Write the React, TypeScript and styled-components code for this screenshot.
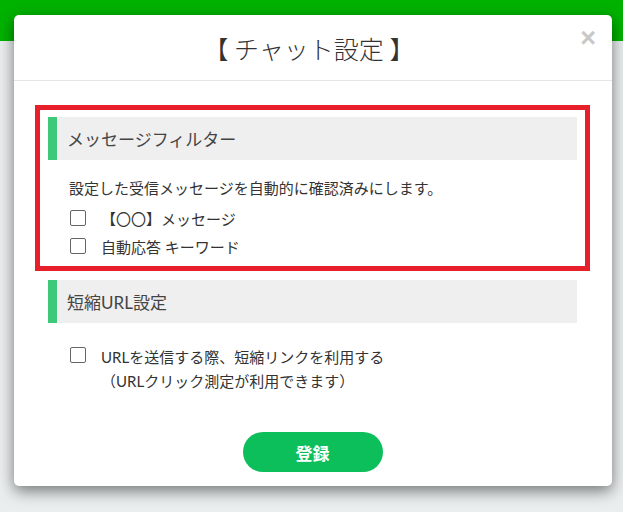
import React, { useState } from 'react';
import styled, { createGlobalStyle } from 'styled-components';

const green = '#0cbf5a';
const accent = '#3ec97a';
const alert = '#e61f2a';

const GlobalStyle = createGlobalStyle`
  html, body {
    margin: 0;
    padding: 0;
  }
  body {
    font-family: Lato, 'Noto Sans CJK JP', sans-serif;
    color: #333;
    background: #eaeeef;
  }
`;

const Page = styled.div`
  position: relative;
  width: 623px;
  height: 512px;
  overflow: hidden;
`;

const TopBar = styled.div`
  height: 41px;
  background: #00b200;
`;

const Modal = styled.div`
  position: absolute;
  top: 15px;
  left: 14px;
  width: 598px;
  height: 471px;
  background: #fff;
  border-radius: 5px;
  box-shadow: 0 5px 15px rgba(0, 0, 0, 0.5);
  display: flex;
  flex-direction: column;
`;

const Header = styled.div`
  position: relative;
  height: 65px;
  border-bottom: 1px solid #e5e5e5;
  display: flex;
  align-items: center;
  justify-content: center;
`;

const Title = styled.h4`
  margin: 0 0 0 -8px;
  font-family: 'Noto Sans CJK JP', sans-serif;
  font-size: 25px;
  font-weight: 300;
  color: #333;
`;

const Close = styled.button`
  position: absolute;
  top: 10px;
  right: 16px;
  border: 0;
  background: none;
  padding: 0;
  font-family: 'Liberation Sans', sans-serif;
  font-size: 27px;
  font-weight: bold;
  line-height: 1;
  color: #c8c8c8;
  cursor: pointer;
`;

const Body = styled.div`
  padding: 24px 22px 0 21px;
  display: flex;
  flex-direction: column;
`;

const Section = styled.div<{ $highlight?: boolean }>`
  border: 5px solid ${(p) => (p.$highlight ? alert : 'transparent')};
  padding: ${(p) => (p.$highlight ? '7px 8px 5px' : '4px 8px 0')};
`;

const SectionHead = styled.div`
  height: 43px;
  background: #efefef;
  border-left: 9px solid ${accent};
  padding-left: 10px;
  display: flex;
  align-items: center;
  font-size: 17px;
  color: #444;
`;

const Description = styled.p`
  margin: 16px 0 5px 21px;
  font-size: 15px;
  line-height: 24px;
`;

const OptionList = styled.div<{ $top?: number }>`
  margin: ${(p) => p.$top ?? 0}px 0 0 22px;
  display: flex;
  flex-direction: column;
`;

const Option = styled.label`
  display: flex;
  align-items: flex-start;
  gap: 15px;
  font-size: 15px;
  line-height: 28px;
  cursor: pointer;
`;

const MultiOption = styled(Option)`
  line-height: 24px;
`;

const Box = styled.input`
  appearance: none;
  width: 16px;
  height: 16px;
  margin: 5px 0 0;
  border: 1px solid #666;
  border-radius: 2px;
  background: #fff;
  flex-shrink: 0;
  cursor: pointer;
  &:checked {
    background: ${green};
    border-color: ${green};
  }
`;

const MultiBox = styled(Box)`
  margin-top: 2px;
`;

const Footer = styled.div`
  display: flex;
  justify-content: center;
  padding-top: 34px;
`;

const Submit = styled.button`
  width: 140px;
  height: 40px;
  border: 0;
  border-radius: 20px;
  background: ${green};
  color: #fff;
  font-family: Lato, 'Noto Sans CJK JP', sans-serif;
  font-size: 17px;
  font-weight: 700;
  cursor: pointer;
`;

const App = () => {
  const [checked, setChecked] = useState<Record<string, boolean>>({});
  const toggle = (key: string) => () =>
    setChecked((c) => ({ ...c, [key]: !c[key] }));

  return (
    <Page>
      <GlobalStyle />
      <TopBar />
      <Modal>
        <Header>
          <Title>【 チャット設定 】</Title>
          <Close aria-label="close">×</Close>
        </Header>
        <Body>
          <Section $highlight>
            <SectionHead>メッセージフィルター</SectionHead>
            <Description>設定した受信メッセージを自動的に確認済みにします。</Description>
            <OptionList>
              <Option>
                <Box type="checkbox" checked={!!checked.a} onChange={toggle('a')} />
                【〇〇】メッセージ
              </Option>
              <Option>
                <Box type="checkbox" checked={!!checked.b} onChange={toggle('b')} />
                自動応答 キーワード
              </Option>
            </OptionList>
          </Section>
          <Section>
            <SectionHead>短縮URL設定</SectionHead>
            <OptionList $top={22}>
              <MultiOption>
                <MultiBox type="checkbox" checked={!!checked.c} onChange={toggle('c')} />
                <span>
                  URLを送信する際、短縮リンクを利用する
                  <br />
                  （URLクリック測定が利用できます）
                </span>
              </MultiOption>
            </OptionList>
          </Section>
          <Footer>
            <Submit>登録</Submit>
          </Footer>
        </Body>
      </Modal>
    </Page>
  );
};

export default App;
